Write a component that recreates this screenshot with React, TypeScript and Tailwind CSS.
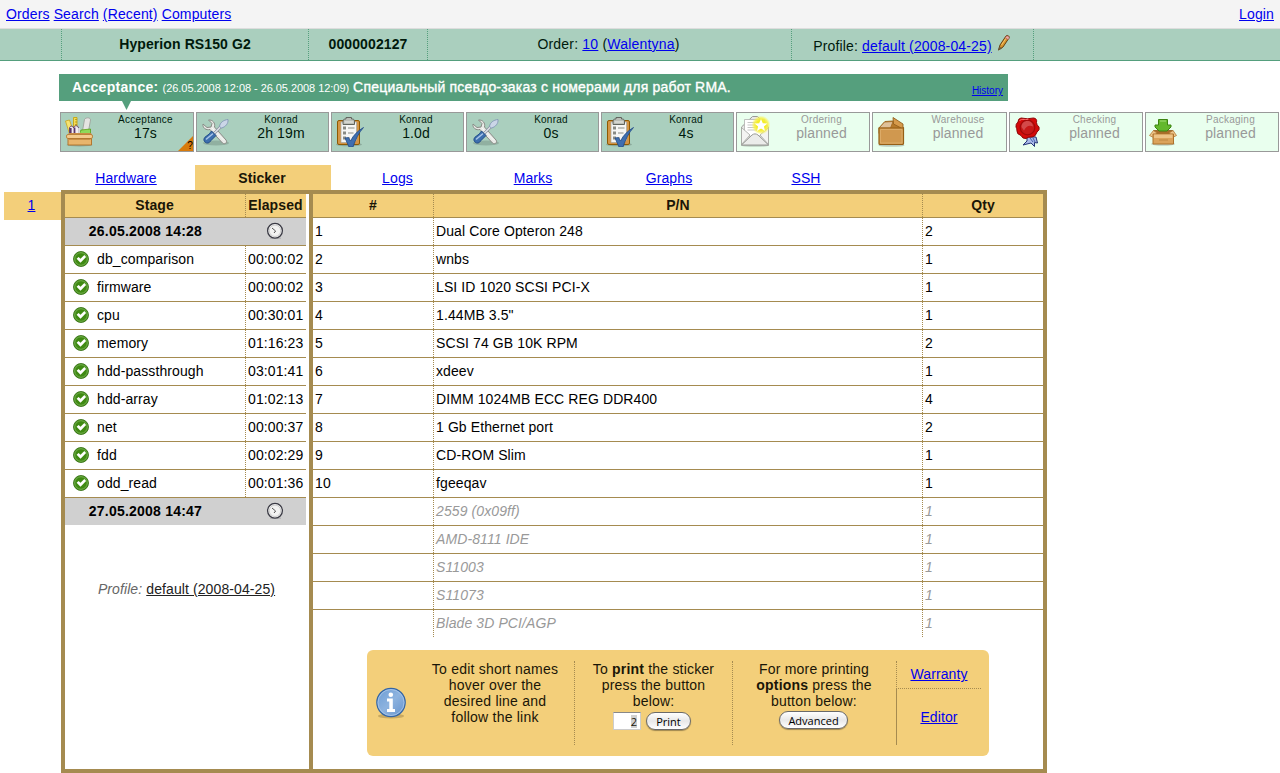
import React from "react";

const link = "text-[#0000ee] underline";

function ToolboxIcon() {
  return (
    <svg width="32" height="32" viewBox="0 0 32 32">
      <ellipse cx="15.5" cy="30" rx="13" ry="1.500" fill="#000" opacity=".18" />
      <path d="M1.500 6l4-1 4 12-4 2z" fill="#f6e272" stroke="#c9a61a" strokeWidth=".8" />
      <path d="M9.500 2.500h3.500V15H9.500z" fill="#f5dc58" stroke="#c4a000" strokeWidth=".8" />
      <path d="M11 4.500h2M11 7h2M11 9.500h2" stroke="#a58a10" strokeWidth=".7" />
      <path d="M5.500 13c.5-2.500 3.500-2.500 4 0 .5-3 4.500-3 5 0v7h-9z" fill="#f2eef3" stroke="#5c3566" strokeWidth=".9" />
      <path d="M6.700 13v6M10.500 12.500v6.500" stroke="#5c3566" strokeWidth="1.800" />
      <path d="M20.500 4.500c1-2.500 6.500-2 6 .5L24.500 16h-6z" fill="#e4e4e2" stroke="#999b96" strokeWidth=".8" />
      <path d="M17 15l9.500-1v4.500H15.500z" fill="#8fd95a" stroke="#4e9a06" strokeWidth=".7" />
      <path d="M15 13v6" stroke="#dcdcda" strokeWidth="1.800" />
      <path d="M5 18h22l1.500 3h-26z" fill="#c98b45" />
      <rect x="2.500" y="19.500" width="26" height="4" rx="1.500" fill="#f3ca8c" stroke="#b3772f" strokeWidth=".8" />
      <path d="M4 23.500h23.500v6.500H4z" fill="#e8b56c" stroke="#b3772f" strokeWidth="1" />
      <path d="M5 24.500h21.500" stroke="#c88f48" strokeWidth="1" />
    </svg>
  );
}

function ToolsIcon() {
  return (
    <svg width="32" height="32" viewBox="0 0 32 32">
      <ellipse cx="16" cy="28" rx="13" ry="2.500" fill="#000" opacity=".15" />
      <path d="M3 9c-.5 4 3 6.500 7 5.500L22.500 28c2 2 5.500-.5 3.500-3L14.500 12c1-4-2-7.500-6-7L12 8.500 11 12l-4 .5z" fill="#e9eae7" stroke="#888a85" strokeWidth="1" strokeLinejoin="round" />
      <path d="M12 13l12 12.500" stroke="#fff" strokeWidth="1" opacity=".7" />
      <path d="M14 18.500l8-8" stroke="#8b93a0" strokeWidth="3" />
      <path d="M14 18.500l8-8" stroke="#dfe3e9" strokeWidth="1.500" />
      <path d="M19.500 11.500c.5-4 4-6.500 8.500-7 .5 4-2.500 7.500-6.500 8.500z" fill="#cbd6e7" stroke="#8297b5" strokeWidth=".9" />
      <path d="M11.500 16l4.500 4.500c-1.500 2-3.500 3-5 5-1.500 2.500-4 3.500-6 1.500s-1-4.500 1.500-6c2.500-1.500 3.500-3 5-5z" fill="#3d6fae" stroke="#204a87" strokeWidth="1" />
      <path d="M6.500 24l6-5" stroke="#a8c4e8" strokeWidth="1.600" strokeLinecap="round" />
    </svg>
  );
}

function ClipboardIcon() {
  return (
    <svg width="32" height="32" viewBox="0 0 32 32">
      <ellipse cx="14" cy="29.500" rx="13" ry="1.800" fill="#000" opacity=".18" />
      <rect x="2.500" y="5.500" width="22" height="24" rx="1.500" fill="#d39547" stroke="#8f5902" strokeWidth="1" />
      <path d="M6 7h15.500v18L18 27.500H6z" fill="#f6f6f5" stroke="#a6a7a3" strokeWidth=".7" />
      <path d="M8 6c0-2 2-2 3-2V2.500h5.500V4c1 0 3 0 3 2v3.500H8z" fill="#babdb6" stroke="#61645e" strokeWidth="1" />
      <path d="M9.500 7h9" stroke="#e6e8e4" strokeWidth="1.200" />
      <g fill="none" stroke="#888a85" strokeWidth="1">
        <rect x="8.500" y="12" width="2" height="2" />
        <rect x="8.500" y="17" width="2" height="2" />
        <rect x="8.500" y="22" width="2" height="2" />
        <path d="M13 13h6.500M13 18h5.500M13 23h2" />
      </g>
      <path d="M10 23l3.500-.5 2 3.500c3-6 7-10 13-13.500-5 5.500-8 12-10.500 19.500h-4z" fill="#3f6eb0" stroke="#204a87" strokeWidth=".8" strokeLinejoin="round" />
    </svg>
  );
}

function EnvelopeIcon() {
  return (
    <svg width="32" height="32" viewBox="0 0 32 32">
      <defs>
        <radialGradient id="starGlow">
          <stop offset=".5" stopColor="#f4ed28" />
          <stop offset=".75" stopColor="#f7f14c" stopOpacity=".8" />
          <stop offset="1" stopColor="#fcf76c" stopOpacity="0" />
        </radialGradient>
      </defs>
      <ellipse cx="15" cy="30.500" rx="14" ry="1.300" fill="#000" opacity=".18" />
      <path d="M1.500 12L12.500 1.500h5l11 10.500v18h-27z" fill="#e8e9e7" stroke="#999b97" strokeWidth="1" />
      <path d="M4.500 4.500h20V19l-10 4-10-4z" fill="#fff" stroke="#b0b1ae" strokeWidth=".8" />
      <path d="M7.500 7.500h9M7.500 10h8M7.500 12.500h8M7.500 15h10" stroke="#c6c7c5" />
      <path d="M1.500 12.500L10 20l-8.500 9.500zM28.500 12.500L20 20l8.500 9.500z" fill="#f3f4f2" stroke="#a2a49f" strokeWidth=".8" />
      <path d="M1.500 30L12 20c2-1.500 4-1.500 6 0l10.500 10z" fill="#ebecea" stroke="#999b97" strokeWidth="1" />
      <circle cx="21" cy="10" r="9.500" fill="url(#starGlow)" />
      <path d="M21 4l1.800 4.200 4.600.3-3.500 3 1.100 4.400-4-2.400-4 2.400 1.100-4.400-3.500-3 4.600-.3z" fill="#fff" />
    </svg>
  );
}

function BoxIcon() {
  return (
    <svg width="32" height="32" viewBox="0 0 32 32">
      <ellipse cx="15.500" cy="30.500" rx="13" ry="1.300" fill="#000" opacity=".2" />
      <path d="M3 13l6-6.500 8-.5 10.500 6.500v6H3z" fill="#b77a2b" stroke="#93601e" strokeWidth=".9" />
      <path d="M3 13l5.500-6 8.500-.5-2.500 6.500z" fill="#dfc19a" stroke="#a3691f" strokeWidth=".8" />
      <path d="M17 2.500l10 6.500v5l-9.500-5z" fill="#d69a4b" stroke="#93601e" strokeWidth=".9" />
      <path d="M3 13h24.500v15.500q0 1-1 1H4q-1 0-1-1z" fill="#d0984f" stroke="#955f16" strokeWidth="1.200" />
      <path d="M4.500 14.500h21.500v13.500H4.500z" fill="none" stroke="#deb06f" strokeWidth=".8" />
    </svg>
  );
}

function SealIcon() {
  return (
    <svg width="32" height="32" viewBox="0 0 32 32">
      <path d="M14 22l9 0 1.500 6-3-.5 0 4-3.500-3.500-8 2 4-4z" fill="#a9b9e8" stroke="#253476" strokeWidth="1" strokeLinejoin="round" />
      <path d="M17 23l3 4M20 23l2 4" stroke="#4962ae" strokeWidth="1" />
      <path d="M8 3q6.500 1.500 12.500 0q4 .5 3 4.500q0 2.500 2.500 4.500q1 3-2 5q-1.500 5-5 5q-3.500-.5-6 1.500q-3.500.5-5-3q-4.500-1.500-4-4.500q0-2.500-1-4q-.5-3 2-5q0-3.500 3-4z" fill="#d40a0a" stroke="#8d0909" strokeWidth="1" />
      <circle cx="14.500" cy="12.500" r="7.300" fill="#c71717" stroke="#a00909" strokeWidth="1.200" />
      <path d="M8.500 12c0-8 11.500-8 11.500-.5-4-2-7 0-9 4z" fill="#fff" opacity=".22" />
      <path d="M6.500 6c1-2.500 5-1 9-1.800" stroke="#ff7070" fill="none" strokeWidth="1" />
    </svg>
  );
}

function PackageIcon() {
  return (
    <svg width="32" height="32" viewBox="0 0 32 32">
      <ellipse cx="14" cy="29" rx="12" ry="1.800" fill="#000" opacity=".18" />
      <path d="M4.500 15.500h19.500v6H4.500z" fill="#a66d28" stroke="#8b5b1e" strokeWidth=".8" />
      <path d="M9.500 4.500h9v5.500h3.500V12l-4 4h-8L6 12v-2h3.500z" fill="#63b82e" stroke="#3d8411" strokeWidth="1" />
      <path d="M11 6h6" stroke="#a3dd79" />
      <path d="M4.500 15.500L.5 20.500l3 1.500 4.500-4zM24 15.500l3.500 5-3 1.500-4.500-4z" fill="#edc58b" stroke="#b57a34" strokeWidth=".8" />
      <path d="M4 19h20.500v10H4z" fill="#dba35b" stroke="#ad722c" strokeWidth="1" />
      <path d="M5 19.500h18.500v3.500H5z" fill="#edc487" />
      <path d="M10 25h9" stroke="#c9904a" strokeWidth="1.500" />
    </svg>
  );
}

function PencilIcon() {
  return (
    <svg width="16" height="18" viewBox="0 0 16 18">
      <path d="M2.500 16l1.500-5L10 2c1.500-1.500 4 .5 3 2L7 13z" fill="#d8962e" stroke="#644012" strokeWidth="1" />
      <path d="M5.500 11l5-7.500" stroke="#f4c56c" strokeWidth="1" />
      <path d="M10 2.500c1-1.500 4 0 3 2l-1 1.200-2.800-2z" fill="#e8aaa6" stroke="#9d4a44" strokeWidth=".6" />
      <path d="M2 16.500l1.500-4 2.500 2z" fill="#705b38" />
    </svg>
  );
}

function CheckIcon() {
  return (
    <svg className="-mt-[2px]" width="16" height="16" viewBox="0 0 16 16">
      <circle cx="8" cy="8" r="7.500" fill="#3f8a12" stroke="#2f6b0d" strokeWidth=".8" />
      <circle cx="8" cy="8" r="6.300" fill="none" stroke="#79b356" strokeWidth=".9" />
      <path d="M3.600 7.700l2-1.800 1.900 1.800 3.800-3.600 1.800 1.900-5.600 5.800z" fill="#fff" />
    </svg>
  );
}

function ClockIcon() {
  return (
    <svg width="18" height="18" viewBox="0 0 18 18">
      <path d="M4 15.500h11v1.500H4z" fill="#000" opacity=".12" />
      <circle cx="9" cy="8.800" r="7.400" fill="#f3f3f2" stroke="#3b3b45" strokeWidth="1.300" />
      <circle cx="9" cy="8.800" r="5.700" fill="none" stroke="#c4c4c4" strokeWidth=".8" />
      <path d="M6 6l3.600 3L8 11" fill="none" stroke="#555" strokeWidth="1" />
    </svg>
  );
}

function InfoIcon() {
  return (
    <svg width="32" height="32" viewBox="0 0 32 32">
      <defs>
        <linearGradient id="infoFill" x1="0" y1="0" x2="1" y2="1">
          <stop offset="0" stopColor="#6c9cd4" />
          <stop offset=".5" stopColor="#8db3df" />
          <stop offset="1" stopColor="#6391cc" />
        </linearGradient>
      </defs>
      <ellipse cx="16" cy="29" rx="13" ry="2.500" fill="#7a6030" opacity=".35" />
      <circle cx="16" cy="15.500" r="14.200" fill="url(#infoFill)" stroke="#3465a4" strokeWidth="1.200" />
      <circle cx="16" cy="15.500" r="13" fill="none" stroke="#a6c4e8" strokeWidth=".9" />
      <circle cx="15.800" cy="7.800" r="2.300" fill="#fff" />
      <path d="M12 11.500h5.800v10.500H20V25h-8v-3h2.300v-7.500H12z" fill="#fff" />
    </svg>
  );
}

const stages = [
  { name: "Acceptance", time: "17s", Icon: ToolboxIcon, width: "w-[134px]", help: true },
  { name: "Konrad", time: "2h 19m", Icon: ToolsIcon, width: "w-[133px]" },
  { name: "Konrad", time: "1.0d", Icon: ClipboardIcon, width: "w-[133px]" },
  { name: "Konrad", time: "0s", Icon: ToolsIcon, width: "w-[133px]" },
  { name: "Konrad", time: "4s", Icon: ClipboardIcon, width: "w-[133px]" },
  { name: "Ordering", time: "planned", Icon: EnvelopeIcon, width: "w-[134px]" },
  { name: "Warehouse", time: "planned", Icon: BoxIcon, width: "w-[135px]" },
  { name: "Checking", time: "planned", Icon: SealIcon, width: "w-[134px]" },
  { name: "Packaging", time: "planned", Icon: PackageIcon, width: "w-[134px]" },
];

const tests = [
  ["db_comparison", "00:00:02"],
  ["firmware", "00:00:02"],
  ["cpu", "00:30:01"],
  ["memory", "01:16:23"],
  ["hdd-passthrough", "03:01:41"],
  ["hdd-array", "01:02:13"],
  ["net", "00:00:37"],
  ["fdd", "00:02:29"],
  ["odd_read", "00:01:36"],
];

const parts = [
  ["1", "Dual Core Opteron 248", "2"],
  ["2", "wnbs", "1"],
  ["3", "LSI ID 1020 SCSI PCI-X", "1"],
  ["4", "1.44MB 3.5\"", "1"],
  ["5", "SCSI 74 GB 10K RPM", "2"],
  ["6", "xdeev", "1"],
  ["7", "DIMM 1024MB ECC REG DDR400", "4"],
  ["8", "1 Gb Ethernet port", "2"],
  ["9", "CD-ROM Slim", "1"],
  ["10", "fgeeqav", "1"],
  ["", "2559 (0x09ff)", "1"],
  ["", "AMD-8111 IDE", "1"],
  ["", "S11003", "1"],
  ["", "S11073", "1"],
  ["", "Blade 3D PCI/AGP", "1"],
];

function StageBoxes() {
  return (
    <div className="mt-[11px] ml-[60px] flex h-10 gap-[2px]">
      {stages.map(({ name, time, Icon, width, help }, i) => (
        <div
          key={i}
          className={`relative flex shrink-0 border border-[#999] ${width} ${
            time === "planned" ? "bg-[#e9ffee] text-[#999]" : "bg-[#aacfbe] text-[#001a0c]"
          }`}
        >
          <div className="mt-[2px] ml-[3px] h-8 w-8 shrink-0"><Icon /></div>
          <div className="flex-1 pl-[2px] text-center">
            <div className="mt-px h-[11px] text-[10px] leading-3 tracking-[0.25px]">{name}</div>
            <div className="leading-4">{time}</div>
          </div>
          {help && (
            <div className="absolute right-0 bottom-0 h-[15px] w-[15px]">
              <svg className="absolute inset-0" width="15" height="15"><path d="M15 0v15H0z" fill="#d87b0c" /></svg>
              <span className="absolute right-0 bottom-0 text-[10px] leading-[10px] text-black">?</span>
            </div>
          )}
        </div>
      ))}
    </div>
  );
}

function SessionRow({ date }: { date: string }) {
  return (
    <div className="flex h-[27px] items-start bg-[#d0d0d0] font-bold">
      <span className="w-[180px] pr-[19px] text-center leading-[27px] tracking-[0.22px]">{date}</span>
      <span className="flex flex-1 justify-center pt-1 pr-px"><ClockIcon /></span>
    </div>
  );
}

function StageTable() {
  return (
    <div className="w-[244px] shrink-0">
      <div className="w-[241px]">
        <div className="flex h-6 border-b border-[#a58b50] bg-[#f3cf7a] text-center leading-[23px] font-bold text-[#1a1607]">
          <div className="w-[180px] pr-px">Stage</div>
          <div className="flex-1 border-l border-dotted border-[#a58b50] pr-px">Elapsed</div>
        </div>
        <SessionRow date="26.05.2008 14:28" />
        <div className="border-y border-[#a58b50]">
          {tests.map(([name, time], i) => (
            <div key={name} className={`flex leading-[27px] ${i ? "h-7 border-t border-[#a58b50]" : "h-[27px]"}`}>
              <div className="flex w-[180px] items-center gap-2 pl-2">
                <CheckIcon />
                <span>{name}</span>
              </div>
              <div className="flex-1 border-l border-dotted border-[#a58b50] pl-[2px]">{time}</div>
            </div>
          ))}
        </div>
        <SessionRow date="27.05.2008 14:47" />
        <div className="mt-[56px] pl-[2px] text-center leading-4 text-[#666]">
          <i>Profile:</i> <span className="text-[#222] underline">default (2008-04-25)</span>
        </div>
      </div>
    </div>
  );
}

function PartsTable() {
  return (
    <div>
      <div className="flex h-[23px] bg-[#f3cf7a] text-center leading-[23px] font-bold text-[#1a1607]">
        <div className="w-[120px]">#</div>
        <div className="w-[489px] border-l border-dotted border-[#a58b50]">P/N</div>
        <div className="flex-1 border-l border-dotted border-[#a58b50]">Qty</div>
      </div>
      {parts.map(([num, name, qty], i) => (
        <div key={i} className={`flex h-7 border-t border-[#a58b50] leading-[27px] ${num ? "" : "text-[#999] italic"}`}>
          <div className="w-[120px] pl-[2px]">{num}</div>
          <div className="w-[489px] border-l border-dotted border-[#a58b50] pl-[2px]">{name}</div>
          <div className="flex-1 border-l border-dotted border-[#a58b50] pl-[2px]">{qty}</div>
        </div>
      ))}
    </div>
  );
}

function AquaButton({ children, className }: { children: React.ReactNode; className: string }) {
  return (
    <button
      className={`h-[18px] rounded-full border border-[#6a6a6a] bg-linear-to-b from-white via-[#e8e8e8] to-white font-['Open_Sans',sans-serif] text-[11px] leading-[15px] font-medium tracking-normal text-black shadow-[0_1px_1px_rgba(0,0,0,0.35)] ${className}`}
    >
      {children}
    </button>
  );
}

function PrintPanel() {
  return (
    <div className="mt-[13px] ml-[54px] flex h-[106px] w-[622px] rounded-[6px] bg-[#f3cf7a] py-[11px] leading-4 text-[#1a1607]">
      <div className="w-[49px] pt-[26px] pl-2"><InfoIcon /></div>
      <div className="w-[158px] text-center tracking-[0.22px]">
        To edit short names<br />hover over the<br />desired line and<br />follow the link
      </div>
      <div className="h-[84px] w-[158px] border-l border-dotted border-[#a58b50] text-center tracking-[0.2px]">
        To <b>print</b> the sticker<br />press the button<br />below:
        <div className="mt-[3px] flex justify-center gap-[5px] pr-[3px]">
          <div className="flex h-[18px] w-[28px] items-center justify-end border border-t-[#888] border-r-[#ccc] border-b-[#ccc] border-l-[#ccc] bg-white pr-[3px] font-['Open_Sans',sans-serif] text-[11px] leading-[13px] tracking-normal">
            <span className="bg-[#d0d0d0]">2</span>
          </div>
          <AquaButton className="w-[45px]">Print</AquaButton>
        </div>
      </div>
      <div className="h-[84px] w-[164px] border-l border-dotted border-[#a58b50] pr-px text-center tracking-[0.2px]">
        For more printing<br /><b>options</b> press the<br />button below:
        <div className="mt-[2px] flex justify-center pr-px"><AquaButton className="w-[69px]">Advanced</AquaButton></div>
      </div>
      <div className="h-[84px] w-[85px] text-center">
        <div className="h-[28px] border-b border-l border-dotted border-[#a58b50] pt-[5px]"><a className={link}>Warranty</a></div>
        <div className="h-[56px] border-l border-[#a58b50] pt-5"><a className={link}>Editor</a></div>
      </div>
    </div>
  );
}

export default function App() {
  return (
    <div className="h-[773px] w-[1280px] overflow-hidden bg-white font-['Liberation_Sans',Arial,sans-serif] text-[14px] leading-4 tracking-[0.1px] text-black">
      <nav className="flex h-[29px] justify-between border-b border-[#ddd] bg-[#f4f4f4] px-[6px] leading-7 tracking-[0.14px]">
        <div className="flex gap-1">
          <a className={link}>Orders</a>
          <a className={link}>Search</a>
          <a className={link}>(Recent)</a>
          <a className={link}>Computers</a>
        </div>
        <a className={link}>Login</a>
      </nav>
      <header className="flex h-8 border-b border-[#559f7d] bg-[#aacfbe] text-center leading-[30px] text-[#001a0c]">
        <div className="w-[61px]" />
        <div className="w-[247px] border-l border-dotted border-[#559f7d] font-bold">Hyperion RS150 G2</div>
        <div className="w-[119px] border-l border-dotted border-[#559f7d] font-bold">0000002127</div>
        <div className="w-[364px] border-l border-dotted border-[#559f7d] pr-[2px] tracking-[0.2px]">
          Order: <a className={link}>10</a> (<a className={link}>Walentyna</a>)
        </div>
        <div className="flex w-[242px] items-start justify-center gap-[2px] border-l border-dotted border-[#559f7d]">
          <span className="leading-[34px] tracking-[0.14px]">Profile: <a className={link}>default (2008-04-25)</a></span>
          <span className="ml-[2px] pt-[5px]"><PencilIcon /></span>
        </div>
        <div className="flex-1 border-l border-dotted border-[#559f7d]" />
      </header>

      <div className="relative mt-[13px] ml-[59px] flex h-[27px] w-[949px] justify-between bg-[#559f7d] pr-[5px] pl-[13px] text-white">
        <div className="leading-[27px] whitespace-nowrap">
          <b className="tracking-[0.3px]">Acceptance:</b> <span className="text-[11px] tracking-[-0.05px]">(26.05.2008 12:08 - 26.05.2008 12:09)</span>{" "}
          <span className="tracking-[0.2px] [-webkit-text-stroke:0.35px_white]">Специальный псевдо-заказ с номерами для работ RMA.</span>
        </div>
        <a className={`pt-[1px] text-[10px] leading-[32px] tracking-normal ${link}`}>History</a>
        <svg className="absolute top-[27px] left-[63px]" width="10" height="9"><path d="M0 0h9L4.500 9z" fill="#559f7d" /></svg>
      </div>

      <StageBoxes />

      <div className="mt-[13px] ml-[59px] flex h-[25px] text-center leading-[26px]">
        <a className={`w-[136px] pr-[2px] ${link}`}>Hardware</a>
        <div className="w-[136px] bg-[#f3cf7a] pr-[2px] font-bold text-[#1a1607]">Sticker</div>
        <a className={`w-[134px] pr-px ${link}`}>Logs</a>
        <a className={`w-[136px] ${link}`}>Marks</a>
        <a className={`w-[136px] ${link}`}>Graphs</a>
        <a className={`w-[138px] ${link}`}>SSH</a>
      </div>

      <main className="flex">
        <div className="mt-[2px] ml-1 h-7 w-[57px] bg-[#f3cf7a] pr-[2px] text-center leading-[27px]"><a className={link}>1</a></div>
        <div className="flex h-[583px] w-[986px] border-4 border-[#a58b50]">
          <StageTable />
          <div className="flex-1 border-l-4 border-[#a58b50]">
            <PartsTable />
            <PrintPanel />
          </div>
        </div>
      </main>
    </div>
  );
}
